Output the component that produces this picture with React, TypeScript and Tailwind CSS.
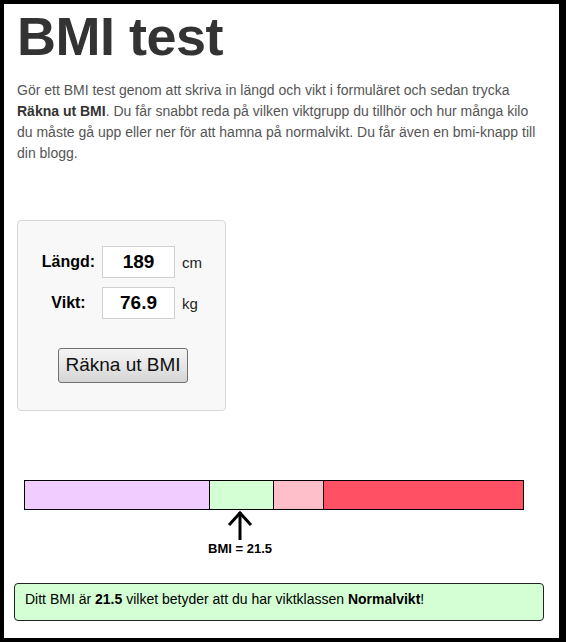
import React from "react";

const bmi = 21.5;
const markerX = 216; // px from bar start for BMI 21.5

export default function App() {
  return (
    <div className="h-[642px] w-[566px] bg-black pt-[4px] pl-[4px] pr-[7px] pb-[4px] font-['Liberation_Sans',Arial,sans-serif]">
      <div className="h-full bg-white pl-[13px] pt-[5px]">
        <h1 className="text-[54px] leading-[54px] font-bold text-[#333] tracking-[-0.5px]">BMI test</h1>
        <p className="mt-[17px] w-[530px] text-[14px] leading-[21px] text-[#555]">
          Gör ett BMI test genom att skriva in längd och vikt i formuläret och sedan trycka{" "}
          <b className="text-[#333]">Räkna ut BMI</b>. Du får snabbt reda på vilken viktgrupp du tillhör och hur många kilo du måste gå upp eller ner för att hamna på normalvikt. Du får även en bmi-knapp till din blogg.
        </p>

        <div className="mt-[56px] h-[191px] w-[209px] rounded-[4px] border border-[#d8d8d8] bg-[#f8f8f8] pt-[25px] pl-[19px]">
          <div className="flex items-center">
            <div className="w-[63px] text-center text-[16px] font-bold text-black">Längd:</div>
            <div className="ml-[2px] flex h-[32px] w-[73px] items-center justify-center border border-[#d0d0d0] bg-white text-[19px] font-bold text-black">189</div>
            <div className="ml-[7px] pt-[3px] text-[15px] text-[#222]">cm</div>
          </div>
          <div className="mt-[9px] flex items-center">
            <div className="w-[63px] text-center text-[16px] font-bold text-black">Vikt:</div>
            <div className="ml-[2px] flex h-[32px] w-[73px] items-center justify-center border border-[#d0d0d0] bg-white text-[19px] font-bold text-black">76.9</div>
            <div className="ml-[7px] pt-[3px] text-[15px] text-[#222]">kg</div>
          </div>
          <div className="mt-[29px] ml-[21px] flex h-[35px] w-[130px] items-center justify-center rounded-[3px] border border-[#707070] bg-gradient-to-b from-[#f4f4f4] via-[#e6e6e6] to-[#d4d4d4] text-[19px] text-[#111]">
            Räkna ut BMI
          </div>
        </div>

        <div className="mt-[69px] ml-[7px] flex h-[30px] w-[500px] border border-black">
          <div className="w-[184px] bg-[#f0ccff]" />
          <div className="w-[64px] border-l border-black bg-[#d4ffd4]" />
          <div className="w-[50px] border-l border-black bg-[#ffbfca]" />
          <div className="flex-1 border-l border-black bg-[#ff5064]" />
        </div>
        <div className="ml-[7px] w-[500px]">
          <div className="flex w-[60px] flex-col items-center" style={{ marginLeft: markerX - 30 }}>
            <svg width="30" height="30" viewBox="0 0 30 30" className="block">
              <path d="M15 2 L15 30" stroke="#000" strokeWidth="3" fill="none" />
              <path d="M4 15 L15 3 L26 15" stroke="#000" strokeWidth="3" fill="none" />
            </svg>
            <div className="mt-[2px] whitespace-nowrap text-[13px] leading-[13px] font-bold text-black">BMI = {bmi}</div>
          </div>
        </div>

        <div className="mt-[28px] -ml-[3px] h-[38px] w-[530px] rounded-[4px] border border-[#222] bg-[#d4ffd4] pt-[5px] pl-[10px] text-[14px] leading-[20px] text-black">
          Ditt BMI är <b>{bmi}</b> vilket betyder att du har viktklassen <b>Normalvikt</b>!
        </div>
      </div>
    </div>
  );
}
